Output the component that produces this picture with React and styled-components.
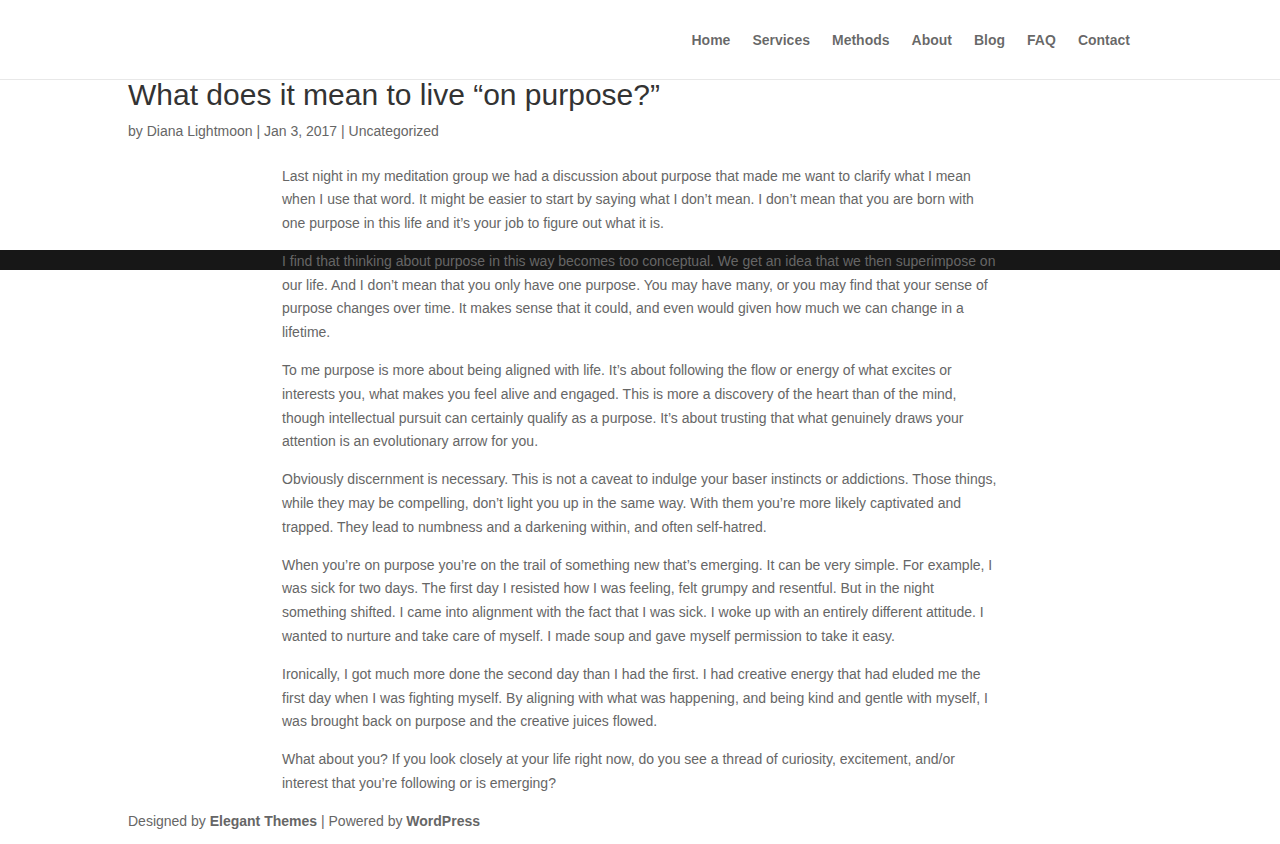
import styled, { createGlobalStyle } from 'styled-components';

const GlobalStyle = createGlobalStyle`
	html, body {
		margin: 0;
		padding: 0;
		background: #ffffff;
	}
	body {
		font-family: 'Liberation Sans', Arial, sans-serif;
		font-size: 14px;
		color: #666666;
		line-height: 1.7;
	}
`;

const navItems = ['Home', 'Services', 'Methods', 'About', 'Blog', 'FAQ', 'Contact'];

const paragraphs = [
	'Last night in my meditation group we had a discussion about purpose that made me want to clarify what I mean when I use that word. It might be easier to start by saying what I don’t mean. I don’t mean that you are born with one purpose in this life and it’s your job to figure out what it is.',
	'I find that thinking about purpose in this way becomes too conceptual. We get an idea that we then superimpose on our life. And I don’t mean that you only have one purpose. You may have many, or you may find that your sense of purpose changes over time. It makes sense that it could, and even would given how much we can change in a lifetime.',
	'To me purpose is more about being aligned with life. It’s about following the flow or energy of what excites or interests you, what makes you feel alive and engaged. This is more a discovery of the heart than of the mind, though intellectual pursuit can certainly qualify as a purpose. It’s about trusting that what genuinely draws your attention is an evolutionary arrow for you.',
	'Obviously discernment is necessary. This is not a caveat to indulge your baser instincts or addictions. Those things, while they may be compelling, don’t light you up in the same way. With them you’re more likely captivated and trapped. They lead to numbness and a darkening within, and often self-hatred.',
	'When you’re on purpose you’re on the trail of something new that’s emerging. It can be very simple. For example, I was sick for two days. The first day I resisted how I was feeling, felt grumpy and resentful. But in the night something shifted. I came into alignment with the fact that I was sick. I woke up with an entirely different attitude. I wanted to nurture and take care of myself. I made soup and gave myself permission to take it easy.',
	'Ironically, I got much more done the second day than I had the first. I had creative energy that had eluded me the first day when I was fighting myself. By aligning with what was happening, and being kind and gentle with myself, I was brought back on purpose and the creative juices flowed.',
	'What about you? If you look closely at your life right now, do you see a thread of curiosity, excitement, and/or interest that you’re following or is emerging?',
];

export default function App() {
	return (
		<Page>
			<GlobalStyle />
			<Header>
				<HeaderInner>
					<Nav>
						{navItems.map((item) => (
							<NavLink key={item} href="#">{item}</NavLink>
						))}
					</Nav>
				</HeaderInner>
			</Header>
			<Strip />
			<Main>
				<Title>What does it mean to live “on purpose?”</Title>
				<Meta>
					by <MetaLink href="#">Diana Lightmoon</MetaLink> | Jan 3, 2017 | <MetaLink href="#">Uncategorized</MetaLink>
				</Meta>
				<Article>
					{paragraphs.map((text, i) => (
						<Para key={i}>{text}</Para>
					))}
				</Article>
			</Main>
			<Footer>
				Designed by <FooterLink href="#">Elegant Themes</FooterLink> | Powered by <FooterLink href="#">WordPress</FooterLink>
			</Footer>
		</Page>
	);
}

const Page = styled.div`
	position: relative;
	min-height: 844px;
`;

const Header = styled.header`
	height: 80px;
	border-bottom: 1px solid #e8e8e8;
	box-sizing: border-box;
	position: relative;
	z-index: 1;
`;

const HeaderInner = styled.div`
	width: 1024px;
	height: 100%;
	margin: 0 auto;
	display: flex;
	justify-content: flex-end;
	align-items: flex-start;
	padding-right: 22px;
	box-sizing: border-box;
`;

const Nav = styled.nav`
	display: flex;
	gap: 22px;
	padding-top: 31px;
`;

const NavLink = styled.a`
	font-weight: 700;
	font-size: 14px;
	line-height: 18px;
	color: rgba(0, 0, 0, 0.6);
	text-decoration: none;
`;

const Strip = styled.div`
	position: absolute;
	top: 250px;
	left: 0;
	right: 0;
	height: 20px;
	background: #171717;
	z-index: 0;
`;

const Main = styled.main`
	width: 1024px;
	margin: 0 auto;
	position: relative;
	z-index: 1;
`;

const Title = styled.h1`
	margin: 0;
	font-size: 30px;
	font-weight: 500;
	line-height: 30px;
	color: #333333;
`;

const Meta = styled.p`
	margin: 9px 0 0;
	font-size: 14px;
	line-height: 24px;
	color: #666666;
`;

const MetaLink = styled.a`
	color: #666666;
	text-decoration: none;
`;

const Article = styled.div`
	width: 718px;
	margin: 21.5px 0 0 154px;
`;

const Para = styled.p`
	margin: 0;
	padding-bottom: 14px;
	font-size: 14px;
	line-height: 1.7;
	color: #666666;
`;

const Footer = styled.footer`
	width: 1024px;
	margin: -1px auto 0;
	font-size: 14px;
	line-height: 24px;
	color: #666666;
	position: relative;
	z-index: 1;
`;

const FooterLink = styled.a`
	font-weight: 700;
	color: #666666;
	text-decoration: none;
`;
